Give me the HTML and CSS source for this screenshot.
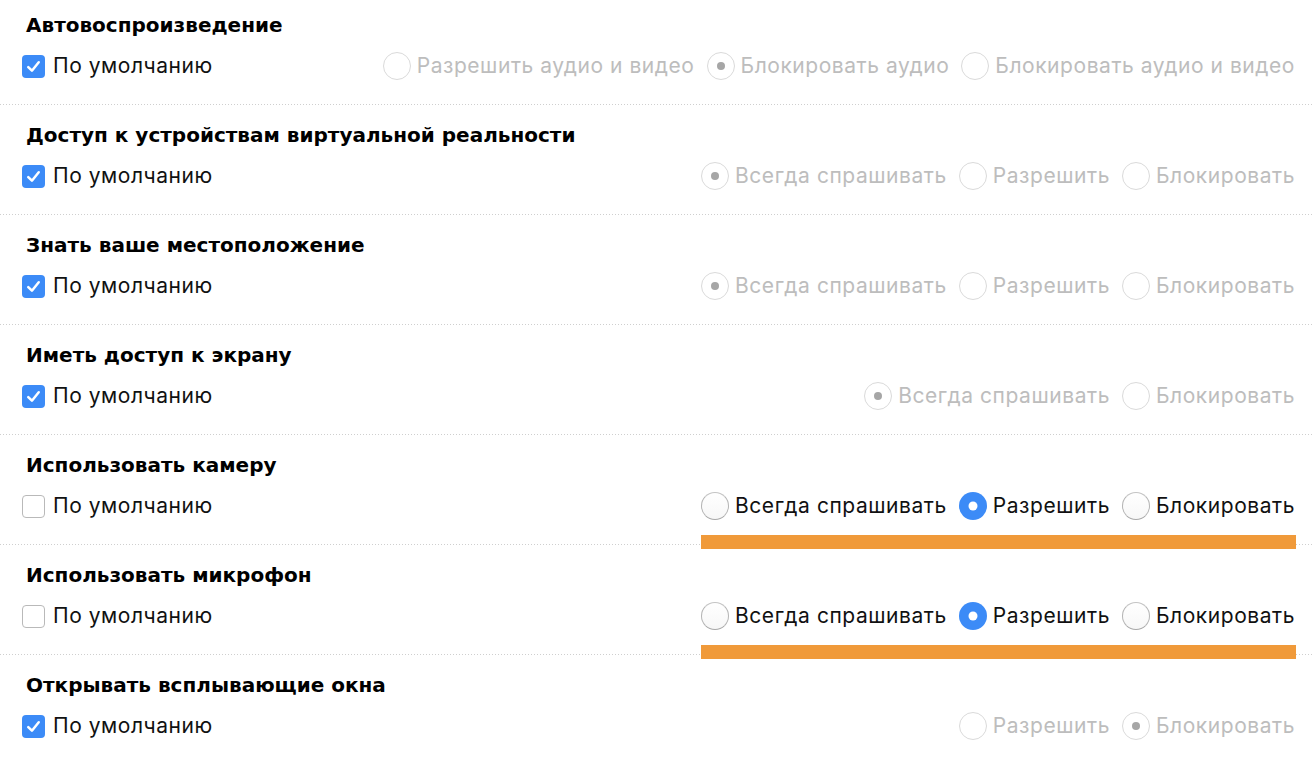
FILE: index.html
```html
<!DOCTYPE html>
<html lang="ru">
<head>
<meta charset="utf-8">
<title>Настройки сайтов</title>
<link rel="stylesheet" href="styles.css">
</head>
<body>
<div class="settings">
  <section class="section">
    <h2 class="title">Автовоспроизведение</h2>
    <div class="row">
      <label class="default"><span class="checkbox checked"><svg viewBox="0 0 22 22"><path d="M6 11.5 L9.5 15 L16 7"/></svg></span><span>По умолчанию</span></label>
      <div class="options disabled">
        <span class="option"><span class="radio"></span>Разрешить аудио и видео</span>
        <span class="option"><span class="radio on"></span>Блокировать аудио</span>
        <span class="option"><span class="radio"></span>Блокировать аудио и видео</span>
      </div>
    </div>
  </section>
  <section class="section">
    <h2 class="title">Доступ к устройствам виртуальной реальности</h2>
    <div class="row">
      <label class="default"><span class="checkbox checked"><svg viewBox="0 0 22 22"><path d="M6 11.5 L9.5 15 L16 7"/></svg></span><span>По умолчанию</span></label>
      <div class="options disabled">
        <span class="option"><span class="radio on"></span>Всегда спрашивать</span>
        <span class="option"><span class="radio"></span>Разрешить</span>
        <span class="option"><span class="radio"></span>Блокировать</span>
      </div>
    </div>
  </section>
  <section class="section">
    <h2 class="title">Знать ваше местоположение</h2>
    <div class="row">
      <label class="default"><span class="checkbox checked"><svg viewBox="0 0 22 22"><path d="M6 11.5 L9.5 15 L16 7"/></svg></span><span>По умолчанию</span></label>
      <div class="options disabled">
        <span class="option"><span class="radio on"></span>Всегда спрашивать</span>
        <span class="option"><span class="radio"></span>Разрешить</span>
        <span class="option"><span class="radio"></span>Блокировать</span>
      </div>
    </div>
  </section>
  <section class="section">
    <h2 class="title">Иметь доступ к экрану</h2>
    <div class="row">
      <label class="default"><span class="checkbox checked"><svg viewBox="0 0 22 22"><path d="M6 11.5 L9.5 15 L16 7"/></svg></span><span>По умолчанию</span></label>
      <div class="options disabled">
        <span class="option"><span class="radio on"></span>Всегда спрашивать</span>
        <span class="option"><span class="radio"></span>Блокировать</span>
      </div>
    </div>
  </section>
  <section class="section">
    <h2 class="title">Использовать камеру</h2>
    <div class="row">
      <label class="default"><span class="checkbox"></span><span>По умолчанию</span></label>
      <div class="options highlighted">
        <span class="option"><span class="radio"></span>Всегда спрашивать</span>
        <span class="option"><span class="radio on"></span>Разрешить</span>
        <span class="option"><span class="radio"></span>Блокировать</span>
      </div>
    </div>
  </section>
  <section class="section">
    <h2 class="title">Использовать микрофон</h2>
    <div class="row">
      <label class="default"><span class="checkbox"></span><span>По умолчанию</span></label>
      <div class="options highlighted">
        <span class="option"><span class="radio"></span>Всегда спрашивать</span>
        <span class="option"><span class="radio on"></span>Разрешить</span>
        <span class="option"><span class="radio"></span>Блокировать</span>
      </div>
    </div>
  </section>
  <section class="section">
    <h2 class="title">Открывать всплывающие окна</h2>
    <div class="row">
      <label class="default"><span class="checkbox checked"><svg viewBox="0 0 22 22"><path d="M6 11.5 L9.5 15 L16 7"/></svg></span><span>По умолчанию</span></label>
      <div class="options disabled">
        <span class="option"><span class="radio"></span>Разрешить</span>
        <span class="option"><span class="radio on"></span>Блокировать</span>
      </div>
    </div>
  </section>
</div>
</body>
</html>
```
FILE: styles.css
```css
html, body {
  margin: 0;
  padding: 0;
  background: #ffffff;
}

body {
  font-family: Inter, "Liberation Sans", sans-serif;
  font-size: 21px;
  letter-spacing: 0.55px;
  color: #111111;
  overflow: hidden;
}

.settings {
  display: flex;
  flex-direction: column;
}

.section {
  padding: 17px 17px 24px 22px;
  background-image: linear-gradient(to right, #cfcfcf 1px, transparent 1px);
  background-size: 3px 1px;
  background-repeat: repeat-x;
  background-position: left bottom;
  border-bottom: 1px solid transparent;
  background-origin: border-box;
}

.section:first-child {
  padding-top: 12px;
}

.title {
  margin: 0 0 14px 4px;
  font-family: "DejaVu Sans", Inter, sans-serif;
  font-size: 20px;
  letter-spacing: 0;
  line-height: 26px;
  font-weight: 700;
  color: #000000;
}

.row {
  display: flex;
  align-items: center;
  justify-content: space-between;
  height: 28px;
}

.default {
  display: flex;
  align-items: center;
  gap: 8px;
  line-height: 28px;
}

.checkbox {
  width: 23px;
  height: 23px;
  box-sizing: border-box;
  border: 1px solid #b9b9b9;
  border-radius: 4px;
  background: #ffffff;
  display: flex;
}

.checkbox.checked {
  border: none;
  background: #3c8bf7;
}

.checkbox svg {
  width: 100%;
  height: 100%;
}

.checkbox path {
  fill: none;
  stroke: #ffffff;
  stroke-width: 2.4;
  stroke-linecap: round;
  stroke-linejoin: round;
}

.options {
  position: relative;
  display: flex;
  align-items: center;
  gap: 12px;
  line-height: 28px;
}

.option {
  display: flex;
  align-items: center;
  gap: 6px;
}

.radio {
  position: relative;
  width: 28px;
  height: 28px;
  box-sizing: border-box;
  border-radius: 50%;
  border: 1px solid #b4b4b4;
  border-top-color: #c4c4c4;
  border-bottom-color: #a8a8a8;
  background: linear-gradient(#ffffff, #f7f7f7);
  flex: none;
}

.radio::after {
  content: "";
  position: absolute;
  left: 50%;
  top: 50%;
  border-radius: 50%;
  transform: translate(-50%, -50%);
}

.radio.on {
  border: none;
  background: #3c8bf7;
}

.radio.on::after {
  width: 9px;
  height: 9px;
  background: #ffffff;
}

.disabled {
  color: #bdbdbd;
}

.disabled .radio {
  border: 1px solid #dadada;
  background: #ffffff;
}

.disabled .radio.on::after {
  width: 8px;
  height: 8px;
  background: #a6a6a6;
}

.highlighted::after {
  content: "";
  position: absolute;
  left: 0;
  right: -1px;
  top: calc(100% + 15px);
  height: 14px;
  background: #f09a3a;
}
```
